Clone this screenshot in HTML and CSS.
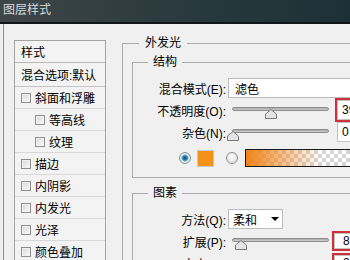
FILE: index.html
```html
<!DOCTYPE html>
<html lang="zh-CN">
<head>
  <meta charset="UTF-8">
  <title>图层样式</title>
  <link rel="stylesheet" href="styles.css">
</head>
<body>
  <div class="titlebar">图层样式</div>

  <div class="client">
    <ul class="style-list">
      <li class="head">样式</li>
      <li class="blend">混合选项:默认</li>
      <li><span class="cb"></span>斜面和浮雕</li>
      <li class="sub"><span class="cb"></span>等高线</li>
      <li class="sub"><span class="cb"></span>纹理</li>
      <li><span class="cb"></span>描边</li>
      <li><span class="cb"></span>内阴影</li>
      <li><span class="cb"></span>内发光</li>
      <li><span class="cb"></span>光泽</li>
      <li><span class="cb"></span>颜色叠加</li>
    </ul>

    <div class="settings">
      <fieldset class="group">
        <legend>外发光</legend>

        <fieldset class="box">
          <legend>结构</legend>
          <div class="row">
            <span class="lbl">混合模式(E):</span>
            <div class="select wide">滤色</div>
          </div>
          <div class="row">
            <span class="lbl">不透明度(O):</span>
            <div class="slider">
              <span class="thumb" style="left: 39%"><svg width="12" height="10" viewBox="0 0 12 10"><path d="M6 0.5 L11.5 5 L11.5 9.5 L0.5 9.5 L0.5 5 Z" fill="#e4e4e4" stroke="#7a7a7a"/></svg></span>
            </div>
            <span class="val hl">39</span>
          </div>
          <div class="row">
            <span class="lbl">杂色(N):</span>
            <div class="slider">
              <span class="thumb" style="left: 0%"><svg width="12" height="10" viewBox="0 0 12 10"><path d="M6 0.5 L11.5 5 L11.5 9.5 L0.5 9.5 L0.5 5 Z" fill="#e4e4e4" stroke="#7a7a7a"/></svg></span>
            </div>
            <span class="val">0</span>
          </div>
          <div class="row colors">
            <span class="radio on"></span>
            <span class="swatch"></span>
            <span class="radio"></span>
            <span class="gradbar"></span>
          </div>
        </fieldset>

        <fieldset class="box">
          <legend>图素</legend>
          <div class="row">
            <span class="lbl">方法(Q):</span>
            <div class="select small">柔和<span class="arrow"></span></div>
          </div>
          <div class="row">
            <span class="lbl">扩展(P):</span>
            <div class="slider">
              <span class="thumb" style="left: 8%"><svg width="12" height="10" viewBox="0 0 12 10"><path d="M6 0.5 L11.5 5 L11.5 9.5 L0.5 9.5 L0.5 5 Z" fill="#e4e4e4" stroke="#7a7a7a"/></svg></span>
            </div>
            <span class="val sm hl">8</span>
          </div>
          <div class="row">
            <span class="lbl">大小(S):</span>
            <div class="slider">
              <span class="thumb" style="left: 20%"><svg width="12" height="10" viewBox="0 0 12 10"><path d="M6 0.5 L11.5 5 L11.5 9.5 L0.5 9.5 L0.5 5 Z" fill="#e4e4e4" stroke="#7a7a7a"/></svg></span>
            </div>
            <span class="val sm hl">20</span>
          </div>
        </fieldset>
      </fieldset>
    </div>
  </div>
</body>
</html>
```

FILE: styles.css
```css
html, body { margin: 0; padding: 0; }
body {
  width: 350px; height: 260px; overflow: hidden;
  background: #f0f0f0; color: #000;
  font-family: "Liberation Sans", "Noto Sans CJK SC", sans-serif; font-size: 12px;
}

.titlebar {
  height: 22px; line-height: 20px; padding-left: 3px;
  color: #d6dada; font-size: 12px;
  background: linear-gradient(90deg, #3e4648 0%, #2c3b3f 45%, #1c3136 100%);
  border-bottom: 2px solid #10171a;
}

.client { display: flex; margin-left: 3px; border-left: 1px solid #8c8c8c; height: 236px; }

/* left column */
.style-list {
  list-style: none; margin: 16px 0 0 10px; padding: 0; flex: none;
  width: 92px; box-sizing: border-box;
  border: 1px solid #a3a3a3; border-bottom: none; background: #f3f3f3;
}
.style-list li {
  height: 22px; box-sizing: border-box; display: flex; align-items: center;
  padding-left: 6px; border-bottom: 1px solid #d8d8d8; white-space: nowrap;
}
.style-list li.head { border-bottom-color: #b8b8b8; }
.style-list li.blend { height: 24px; border-bottom-color: #c4c4c4; }
.style-list li.sub { padding-left: 20px; }
.cb {
  width: 10px; height: 10px; box-sizing: border-box; margin-right: 4px; flex: none;
  border: 1px solid #8e8f8f; background: linear-gradient(135deg, #d8d8d8, #fbfbfb);
  box-shadow: inset 0 0 0 1px #f2f2f2;
}

/* right column */
.settings { flex: none; width: 420px; }
fieldset { margin: 0; padding: 0; min-width: 0; border: 1px solid #aaaaaa; }
legend { line-height: 16px; }
.group { margin: 11px 0 0 16px; padding: 0 0 10px 9px; border-right: none; border-bottom: none; }
.group > legend { margin-left: 7px; padding: 0 6px; }
.box { margin-top: 3px; padding: 7px 0 9px; border-right: none; }
.box + .box { margin-top: 7px; }
.box > legend { margin-left: 15px; padding: 0 5px; }

.row { height: 22px; display: flex; align-items: center; white-space: nowrap; }
.lbl { width: 93px; flex: none; text-align: right; }

.select {
  height: 20px; box-sizing: border-box; margin-left: 2px; padding-left: 6px;
  display: flex; align-items: center; background: #fff; border: 1px solid #bcbcbc;
}
.select.wide { width: 200px; }
.select.small { width: 55px; padding-left: 4px; padding-right: 3px; justify-content: space-between; }
.arrow { width: 0; height: 0; border-left: 4px solid transparent; border-right: 4px solid transparent; border-top: 4px solid #000; }

.slider { position: relative; width: 97px; height: 22px; margin-left: 6px; flex: none; }
.slider::before {
  content: ""; position: absolute; left: 0; right: 0; top: 8px; height: 4px;
  border-radius: 2px; border: 1px solid #8d8d8d; box-sizing: border-box;
  background: linear-gradient(#a8a8a8, #cfcfcf);
}
.thumb { position: absolute; top: 10px; margin-left: -5px; width: 12px; height: 10px; line-height: 0; }

.val {
  width: 40px; height: 20px; box-sizing: border-box; margin-left: 8px; padding-left: 4px;
  display: flex; align-items: center; background: #fff; border: 1px solid #c2c2c2;
}
.val.sm { height: 16px; margin-left: 5px; padding-left: 8px; }
.hl { outline: 2px solid #cf3039; }

.colors { height: 20px; margin-top: 5px; padding-left: 46px; }
.radio {
  width: 12px; height: 12px; box-sizing: border-box; border-radius: 50%; flex: none;
  border: 1px solid #8e8f8f; background: radial-gradient(circle at 45% 40%, #ffffff, #d6d6d6);
}
.radio.on { background: radial-gradient(circle, #0c4a6c 0, #2a86b8 2.3px, #8cc8e6 3.3px, #eeeeee 4px, #d2d2d2 100%); }
.swatch { width: 17px; height: 17px; box-sizing: border-box; margin: 0 12px 0 6px; background: #f39219; border: 1px solid #c9c9c9; }
.gradbar {
  width: 140px; height: 18px; box-sizing: border-box; margin-left: 7px; flex: none;
  border: 1px solid #1a1a1a;
  background: linear-gradient(90deg, #ef8419 0%, rgba(239, 132, 25, 0) 55%),
              repeating-conic-gradient(#d6d6d6 0 25%, #ffffff 0 50%) 0 0 / 8px 8px;
}
```
